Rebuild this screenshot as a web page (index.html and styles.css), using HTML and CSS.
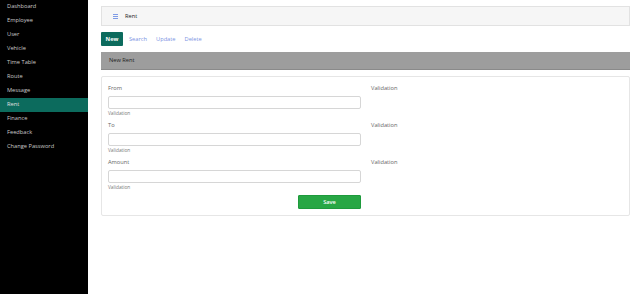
FILE: index.html
```html
<!DOCTYPE html>
<html>
<head>
<meta charset="utf-8">
<link rel="stylesheet" href="styles.css">
</head>
<body>
<div class="layout">
  <nav class="sidebar">
    <a class="nav-item">Dashboard</a>
    <a class="nav-item">Employee</a>
    <a class="nav-item">User</a>
    <a class="nav-item">Vehicle</a>
    <a class="nav-item">Time Table</a>
    <a class="nav-item">Route</a>
    <a class="nav-item">Message</a>
    <a class="nav-item active">Rent</a>
    <a class="nav-item">Finance</a>
    <a class="nav-item">Feedback</a>
    <a class="nav-item">Change Password</a>
  </nav>
  <main class="main">
    <div class="topbar">
      <svg class="burger" width="5" height="5" viewBox="0 0 5 5"><rect x="0" y="0" width="5" height="1" fill="#7f9be6"/><rect x="0" y="2" width="5" height="1" fill="#7f9be6"/><rect x="0" y="4" width="5" height="1" fill="#7f9be6"/></svg>
      <span class="topbar-title">Rent</span>
    </div>
    <div class="tabs">
      <span class="tab active">New</span>
      <span class="tab">Search</span>
      <span class="tab">Update</span>
      <span class="tab">Delete</span>
    </div>
    <div class="section-head">New Rent</div>
    <div class="card">
      <div class="row">
        <div class="field">
          <label class="label">From</label>
          <input class="input" type="text">
          <div class="hint">Validation</div>
        </div>
        <div class="side-val">Validation</div>
      </div>
      <div class="row">
        <div class="field">
          <label class="label">To</label>
          <input class="input" type="text">
          <div class="hint">Validation</div>
        </div>
        <div class="side-val">Validation</div>
      </div>
      <div class="row">
        <div class="field">
          <label class="label">Amount</label>
          <input class="input" type="text">
          <div class="hint">Validation</div>
        </div>
        <div class="side-val">Validation</div>
      </div>
      <div class="actions">
        <button class="save">Save</button>
      </div>
    </div>
  </main>
</div>
</body>
</html>
```
FILE: styles.css
```css
* { box-sizing: border-box; }
html, body { margin: 0; padding: 0; height: 100%; }
body {
  font-family: "Open Sans", "Noto Sans", sans-serif;
  background: #fff;
  color: #333;
}
.layout { display: flex; height: 294px; }
.sidebar {
  width: 88px;
  flex: none;
  background: #000;
  display: flex;
  flex-direction: column;
}
.nav-item {
  display: block;
  height: 14px;
  line-height: 13px;
  padding-left: 7px;
  font-size: 5.7px;
  color: #c9c9c9;
}
.nav-item.active { background: #0c6b5d; color: #e0e0e0; }
.main {
  flex: 1;
  padding: 6px 10px 0 13px;
  display: flex;
  flex-direction: column;
}
.topbar {
  height: 20px;
  background: #f6f6f6;
  border: 1px solid #e2e2e2;
  display: flex;
  align-items: center;
  padding-left: 11px;
}
.burger { margin-right: 7px; }
.topbar-title { font-size: 5.7px; color: #222; }
.tabs {
  display: flex;
  align-items: center;
  margin-top: 6px;
  height: 14px;
}
.tab {
  font-size: 5.7px;
  color: #7b93e3;
  margin-right: 9px;
}
.tab.active {
  background: #0c6b5d;
  color: #fff;
  font-weight: 700;
  height: 14px;
  line-height: 14px;
  padding: 0 4px;
  border-radius: 1px;
  width: 22px;
  text-align: center;
  margin-right: 6px;
}
.section-head {
  margin-top: 6px;
  height: 18px;
  background: #9d9d9d;
  border-bottom: 1px solid #8a8a8a;
  font-size: 5.7px;
  line-height: 17px;
  padding-left: 8px;
  color: #222;
}
.card {
  margin-top: 6px;
  border: 1px solid #e6e6e6;
  border-radius: 2px;
  padding: 7px 6px 6px 6px;
  height: 140px;
}
.row { display: flex; }
.field { width: 253px; display: flex; flex-direction: column; }
.label { font-size: 5.7px; color: #666; height: 12px; line-height: 9px; }
.input {
  height: 13px;
  border: 1px solid #d6d6d6;
  border-radius: 2px;
  margin: 0;
  padding: 0;
  background: #fff;
}
.hint { font-size: 4.8px; color: #777; height: 12px; line-height: 9px; }
.side-val { font-size: 5.7px; color: #666; margin-left: 10px; line-height: 9px; }
.actions { width: 253px; display: flex; justify-content: flex-end; }
.save {
  width: 63px;
  height: 14px;
  background: #28a745;
  border: 1px solid #1e9a3c;
  border-radius: 1px;
  color: #fff;
  font-family: inherit;
  font-size: 5.7px;
  font-weight: 600;
  padding: 0;
}
```
